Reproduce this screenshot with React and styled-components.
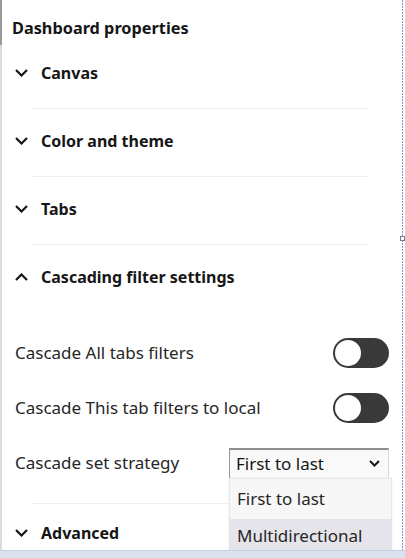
import styled, { createGlobalStyle } from "styled-components";

const GlobalStyle = createGlobalStyle`
    html, body {
        margin: 0;
        padding: 0;
        background: #ffffff;
    }
    body {
        font-family: "Noto Sans", "Open Sans", sans-serif;
        color: #161616;
    }
`;

const Frame = styled.div`
    width: 405px;
    height: 558px;
    display: flex;
    flex-direction: column;
    overflow: hidden;
`;

const Body = styled.div`
    flex: 1;
    display: flex;
    min-height: 0;
    overflow: hidden;
`;

const LeftRail = styled.div`
    width: 2px;
    background: linear-gradient(to bottom, #9a9a9a 0, #9a9a9a 45px, #dcdcdc 45px);
`;

const Panel = styled.div`
    flex: 1;
    padding: 0 12px 0 13px;
    background: #ffffff;
`;

const RightEdge = styled.div`
    width: 4px;
    position: relative;
    background: repeating-linear-gradient(
        to bottom,
        #7f9cc4 0,
        #7f9cc4 2px,
        #ffffff 2px,
        #ffffff 3px
    );
    background-size: 1px 100%;
    background-repeat: no-repeat;
    background-position: 1px 0;
`;

const Handle = styled.span`
    position: absolute;
    top: 236px;
    left: -1px;
    width: 5px;
    height: 5px;
    border: 1px solid #6d7f99;
    background: #ffffff;
    box-sizing: border-box;
`;

const BottomStrip = styled.div`
    height: 7px;
    background: #dbe3ee;
    border-top: 1px solid #c5d0de;
`;

const Title = styled.h2`
    margin: 0 0 0 -3px;
    padding-top: 16px;
    height: 25px;
    font-size: 16.3px;
    font-weight: 700;
    line-height: 24px;
    color: #161616;
`;

const SectionHeader = styled.div`
    display: flex;
    align-items: center;
    gap: 13px;
    height: ${(p) => p.h || 64}px;
    padding-bottom: ${(p) => p.pb || 0}px;
    font-size: 16px;
    font-weight: 700;
    color: #161616;
`;

const Divider = styled.div`
    height: 1px;
    margin: 0 20px 0 17px;
    background: #f0f0f0;
`;

const Chevron = ({ up }) => (
    <svg width="13" height="8" viewBox="0 0 13 8" fill="none">
        <path
            d={up ? "M1 7 L6.5 1.5 L12 7" : "M1 1 L6.5 6.5 L12 1"}
            stroke="#161616"
            strokeWidth="2.2"
        />
    </svg>
);

const Settings = styled.div`
    padding: 16px 0 13px;
`;

const SettingRow = styled.div`
    display: flex;
    align-items: center;
    justify-content: space-between;
    height: 55px;
    font-size: 17px;
    color: #262626;
`;

const Toggle = styled.span`
    width: 56px;
    height: 30px;
    border-radius: 15px;
    background: #393939;
    display: flex;
    align-items: center;
    padding: 2px;
    box-sizing: border-box;
    &::after {
        content: "";
        width: 26px;
        height: 26px;
        border-radius: 50%;
        background: #ffffff;
    }
`;

const SelectWrap = styled.div`
    position: relative;
    width: 160px;
`;

const SelectBox = styled.div`
    height: 30px;
    box-sizing: border-box;
    display: flex;
    align-items: center;
    justify-content: space-between;
    padding: 0 8px 0 6px;
    background: #f9f9f9;
    border-top: 2px solid #8d8d8d;
    border-left: 1px solid #9a9a9a;
    border-right: 1px solid #d8d8d8;
    font-size: 17px;
    color: #161616;
`;

const Menu = styled.div`
    position: absolute;
    top: 30px;
    left: 0;
    width: 161px;
    background: #f4f4f4;
    border: 1px solid #e6e6e6;
    box-shadow: 0 1px 3px rgba(0, 0, 0, 0.08);
    z-index: 2;
`;

const Option = styled.div`
    height: ${(p) => (p.active ? 34 : 40)}px;
    display: flex;
    align-items: center;
    padding-left: 7px;
    font-size: 17px;
    color: #262626;
    background: ${(p) => (p.active ? "#e4e4ea" : "#f7f7f7")};
`;

export default function App() {
    return (
        <Frame>
            <GlobalStyle />
            <Body>
                <LeftRail />
                <Panel>
                    <Title>Dashboard properties</Title>
                    <SectionHeader pb={3}>
                        <Chevron /> Canvas
                    </SectionHeader>
                    <Divider />
                    <SectionHeader pb={3}>
                        <Chevron /> Color and theme
                    </SectionHeader>
                    <Divider />
                    <SectionHeader pb={3}>
                        <Chevron /> Tabs
                    </SectionHeader>
                    <Divider />
                    <SectionHeader>
                        <Chevron up /> Cascading filter settings
                    </SectionHeader>
                    <Settings>
                        <SettingRow>
                            Cascade All tabs filters
                            <Toggle />
                        </SettingRow>
                        <SettingRow>
                            Cascade This tab filters to local
                            <Toggle />
                        </SettingRow>
                        <SettingRow>
                            Cascade set strategy
                            <SelectWrap>
                                <SelectBox>
                                    First to last
                                    <svg width="11" height="7" viewBox="0 0 11 7" fill="none">
                                        <path d="M1 1 L5.5 5.5 L10 1" stroke="#161616" strokeWidth="2" />
                                    </svg>
                                </SelectBox>
                                <Menu>
                                    <Option>First to last</Option>
                                    <Option active>Multidirectional</Option>
                                </Menu>
                            </SelectWrap>
                        </SettingRow>
                    </Settings>
                    <Divider />
                    <SectionHeader h={58}>
                        <Chevron /> Advanced
                    </SectionHeader>
                </Panel>
                <RightEdge>
                    <Handle />
                </RightEdge>
            </Body>
            <BottomStrip />
        </Frame>
    );
}
